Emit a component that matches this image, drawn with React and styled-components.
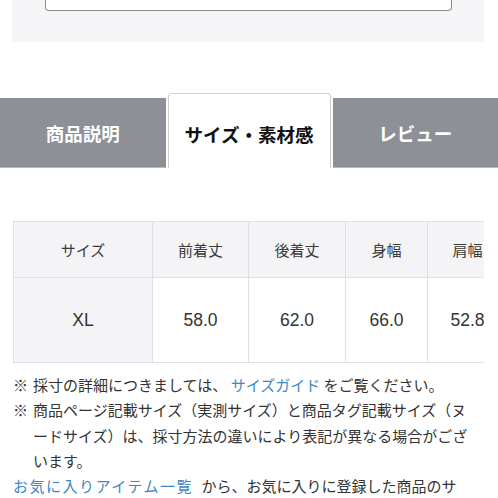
import styled, { createGlobalStyle } from 'styled-components';

const GlobalStyle = createGlobalStyle`
    html, body {
        margin: 0;
        padding: 0;
        background: #ffffff;
    }
    body {
        font-family: "Noto Sans CJK JP", "Noto Sans", sans-serif;
        color: #333333;
        overflow: hidden;
    }
`;

const sizes = [
    { label: '前着丈', value: '58.0', width: 96 },
    { label: '後着丈', value: '62.0', width: 97 },
    { label: '身幅', value: '66.0', width: 82 },
    { label: '肩幅', value: '52.8', width: 80 },
];

const App = () => {
    return (
        <Page>
            <GlobalStyle />
            <TopPanel>
                <InputBox />
            </TopPanel>

            <TabBar>
                <Tab>商品説明</Tab>
                <Tab $active>サイズ・素材感</Tab>
                <Tab>レビュー</Tab>
            </TabBar>

            <TableWrap>
                <SizeTable>
                    <colgroup>
                        <col style={{ width: 139 }} />
                        {sizes.map(s => (
                            <col key={s.label} style={{ width: s.width }} />
                        ))}
                    </colgroup>
                    <thead>
                        <tr>
                            <HeadCell>サイズ</HeadCell>
                            {sizes.map(s => (
                                <HeadCell key={s.label}>{s.label}</HeadCell>
                            ))}
                        </tr>
                    </thead>
                    <tbody>
                        <tr>
                            <DataCell $first>XL</DataCell>
                            {sizes.map(s => (
                                <DataCell key={s.label}>{s.value}</DataCell>
                            ))}
                        </tr>
                    </tbody>
                </SizeTable>
            </TableWrap>

            <Notes>
                <Note>
                    <Mark>※</Mark>
                    <span>採寸の詳細につきましては、 <Link>サイズガイド</Link> をご覧ください。</span>
                </Note>
                <Note>
                    <Mark>※</Mark>
                    <span>商品ページ記載サイズ（実測サイズ）と商品タグ記載サイズ（ヌードサイズ）は、採寸方法の違いにより表記が異なる場合がございます。</span>
                </Note>
                <Plain>
                    <Link $wide>お気に入りアイテム一覧</Link> から、お気に入りに登録した商品のサイズ比較が可能です。
                </Plain>
            </Notes>
        </Page>
    );
};

const Page = styled.div`
    width: 498px;
    height: 498px;
    overflow: hidden;
`;

const TopPanel = styled.div`
    margin: 0 14px 0 12px;
    height: 42px;
    background: #f5f5f7;
    padding: 0 32px 0 33px;
    box-sizing: border-box;
`;

const InputBox = styled.div`
    height: 11px;
    background: #ffffff;
    border: 1.5px solid #8a8a8a;
    border-top: none;
    border-radius: 0 0 4px 4px;
    box-sizing: border-box;
`;

const TabBar = styled.div`
    margin-top: 51px;
    height: 75px;
    display: flex;
    align-items: flex-end;
    gap: 2px;
`;

const Tab = styled.div`
    flex: ${props => (props.$active ? '0 0 163px' : '1 1 0')};
    height: ${props => (props.$active ? '75px' : '70px')};
    box-sizing: border-box;
    display: flex;
    align-items: center;
    justify-content: center;
    padding-top: ${props => (props.$active ? '5px' : '0')};
    font-size: 18.5px;
    font-weight: 700;
    color: ${props => (props.$active ? '#111111' : '#ffffff')};
    background: ${props => (props.$active ? '#ffffff' : '#8e9097')};
    border: ${props => (props.$active ? '1px solid #cfd0d4' : 'none')};
    border-bottom: ${props => (props.$active ? 'none' : '1px solid #b9bbc0')};
    border-radius: ${props => (props.$active ? '4px 4px 0 0' : '0')};
`;

const TableWrap = styled.div`
    margin: 53px 0 0 13px;
    width: 471px;
    overflow: hidden;
`;

const SizeTable = styled.table`
    border-collapse: collapse;
    table-layout: fixed;
    width: 494px;
    border: 1px solid #dde0e6;
`;

const HeadCell = styled.th`
    height: 55px;
    padding: 0;
    background: #f4f4f6;
    border: 1px solid #dde0e6;
    font-size: 15px;
    font-weight: 400;
    color: #3a3a3a;
    text-align: center;
`;

const DataCell = styled.td`
    height: 84px;
    padding: 0;
    background: ${props => (props.$first ? '#f4f4f6' : '#ffffff')};
    border: 1px solid #dde0e6;
    font-family: "Liberation Sans", Arial, sans-serif;
    font-size: 17.5px;
    color: #333333;
    text-align: center;
`;

const Notes = styled.div`
    margin: 9px 0 0 13px;
    width: 458px;
    font-size: 15px;
    line-height: 25.3px;
    color: #333333;
`;

const Note = styled.div`
    display: flex;
`;

const Mark = styled.span`
    flex: 0 0 20px;
`;

const Plain = styled.div``;

const Link = styled.span`
    color: #3f86c4;
    letter-spacing: ${props => (props.$wide ? '1.5px' : '0')};
    margin-right: ${props => (props.$wide ? '5px' : '0')};
`;

export default App;
